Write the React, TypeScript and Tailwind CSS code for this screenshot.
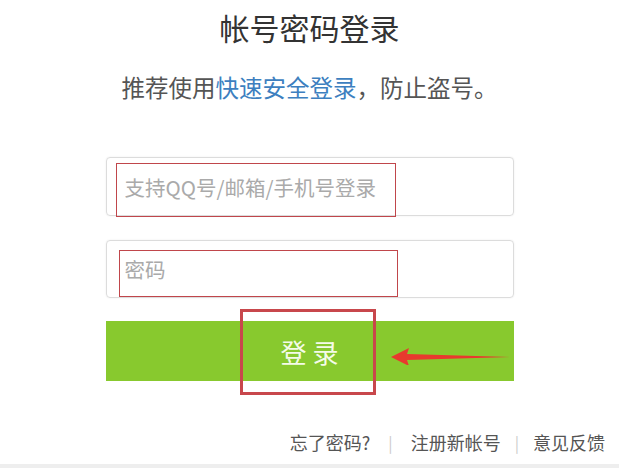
import React from 'react';

const font = "font-['Microsoft_YaHei','Noto_Sans_CJK_SC','Liberation_Sans',sans-serif]";

export default function App() {
  return (
    <div className={`w-[619px] h-[468px] bg-white overflow-hidden ${font}`}>
      {/* 标题 */}
      <h1 className="pt-[9px] text-center text-[30px] leading-[36px] text-[#333] font-normal">帐号密码登录</h1>
      <p className="mt-[27px] text-center text-[23.5px] leading-[30px] text-[#555]">
        推荐使用<span className="text-[#3d7fbf]">快速安全登录</span>，防止盗号。
      </p>

      <div className="w-[408px] mx-auto mt-[55px]">
        {/* 帐号 */}
        <div className="relative h-[59px] border border-[#dcdcdc] rounded-[4px] shadow-[0_0_2px_rgba(0,0,0,0.08)] flex items-center">
          <input
            className="w-full h-full pl-[18px] text-[20.5px] text-[#333] placeholder:text-[#aaa] outline-none bg-transparent"
            placeholder="支持QQ号/邮箱/手机号登录"
          />
          <div className="absolute left-[9px] top-[5px] w-[280px] h-[54px] border border-[#c0464b] pointer-events-none" />
        </div>

        {/* 密码 */}
        <div className="relative mt-[24px] h-[58px] border border-[#dcdcdc] rounded-[4px] shadow-[0_0_2px_rgba(0,0,0,0.08)] flex items-center">
          <input
            type="password"
            className="w-full h-full pl-[18px] text-[20.5px] text-[#333] placeholder:text-[#aaa] outline-none bg-transparent"
            placeholder="密码"
          />
          <div className="absolute left-[12px] top-[9px] w-[279px] h-[47px] border border-[#c0464b] pointer-events-none" />
        </div>

        {/* 登录按钮 */}
        <div className="relative mt-[23px] h-[60px] bg-[#88c92e] flex items-center justify-center">
          <span className="text-[26px] tracking-[6px] pl-[6px] text-[#f4fbe8]">登录</span>
          <div className="absolute left-[134px] top-[-12px] w-[136px] h-[86px] border-[3px] border-[#c8474c]" />
          <svg className="absolute left-[282px] top-[26px]" width="126" height="18" viewBox="0 0 126 18">
            <path d="M3 10 L21 1 L19 7 L124 10 L19 13 L21 19 Z" fill="#e8392e" />
          </svg>
        </div>
      </div>

      {/* 底部链接 */}
      <div className="mt-[49px] flex justify-end items-center pr-[14px] text-[18px] leading-[24px] text-[#555]">
        <span>忘了密码?</span>
        <span className="mx-[18px] text-[#ccc] text-[16px]">|</span>
        <span>注册新帐号</span>
        <span className="mx-[14px] text-[#ccc] text-[16px]">|</span>
        <span>意见反馈</span>
      </div>
      <div className="mt-[10px] h-[4px] bg-[#eeeeee]" />
    </div>
  );
}
